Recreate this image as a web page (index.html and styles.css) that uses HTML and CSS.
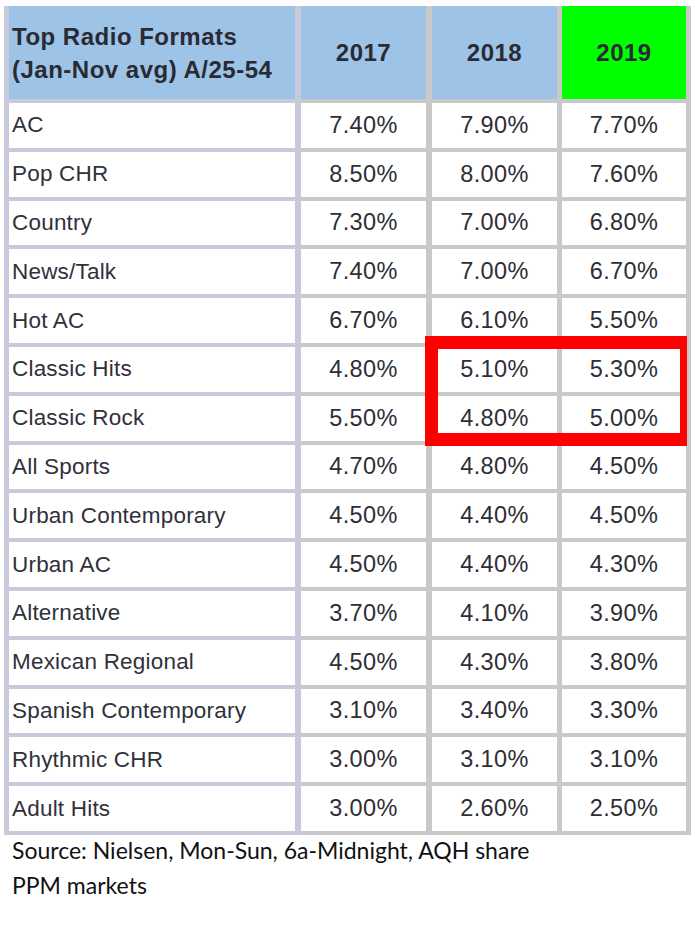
FILE: index.html
```
<!DOCTYPE html>
<html>
<head>
<meta charset="utf-8">
<link rel="stylesheet" href="styles.css">
</head>
<body>
<div class="wrap">
<table class="sheet">
<thead>
<tr>
<th class="c1">Top Radio Formats<br>(Jan-Nov avg) A/25-54</th>
<th class="c2">2017</th>
<th class="c3">2018</th>
<th class="c4 now">2019</th>
</tr>
</thead>
<tbody>
<tr><td class="c1">AC</td><td class="c2">7.40%</td><td class="c3">7.90%</td><td class="c4">7.70%</td></tr>
<tr><td class="c1">Pop CHR</td><td class="c2">8.50%</td><td class="c3">8.00%</td><td class="c4">7.60%</td></tr>
<tr><td class="c1">Country</td><td class="c2">7.30%</td><td class="c3">7.00%</td><td class="c4">6.80%</td></tr>
<tr><td class="c1">News/Talk</td><td class="c2">7.40%</td><td class="c3">7.00%</td><td class="c4">6.70%</td></tr>
<tr><td class="c1">Hot AC</td><td class="c2">6.70%</td><td class="c3">6.10%</td><td class="c4">5.50%</td></tr>
<tr><td class="c1">Classic Hits</td><td class="c2">4.80%</td><td class="c3">5.10%</td><td class="c4">5.30%</td></tr>
<tr><td class="c1">Classic Rock</td><td class="c2">5.50%</td><td class="c3">4.80%</td><td class="c4">5.00%</td></tr>
<tr><td class="c1">All Sports</td><td class="c2">4.70%</td><td class="c3">4.80%</td><td class="c4">4.50%</td></tr>
<tr><td class="c1">Urban Contemporary</td><td class="c2">4.50%</td><td class="c3">4.40%</td><td class="c4">4.50%</td></tr>
<tr><td class="c1">Urban AC</td><td class="c2">4.50%</td><td class="c3">4.40%</td><td class="c4">4.30%</td></tr>
<tr><td class="c1">Alternative</td><td class="c2">3.70%</td><td class="c3">4.10%</td><td class="c4">3.90%</td></tr>
<tr><td class="c1">Mexican Regional</td><td class="c2">4.50%</td><td class="c3">4.30%</td><td class="c4">3.80%</td></tr>
<tr><td class="c1">Spanish Contemporary</td><td class="c2">3.10%</td><td class="c3">3.40%</td><td class="c4">3.30%</td></tr>
<tr><td class="c1">Rhythmic CHR</td><td class="c2">3.00%</td><td class="c3">3.10%</td><td class="c4">3.10%</td></tr>
<tr><td class="c1">Adult Hits</td><td class="c2">3.00%</td><td class="c3">2.60%</td><td class="c4">2.50%</td></tr>
</tbody>
</table>
<div class="highlight"></div>
</div>
<div class="source">Source: Nielsen, Mon-Sun, 6a-Midnight, AQH share<br>PPM markets</div>
</body>
</html>
```
FILE: styles.css
```
html, body {
  margin: 0;
  padding: 0;
  background: #ffffff;
}

.wrap {
  position: relative;
  margin: 6px 0 0 4px;
  width: 687px;
}

.sheet {
  border-collapse: separate;
  border-spacing: 0;
  table-layout: fixed;
  font-family: "Liberation Sans", Arial, sans-serif;
  color: #2e2e34;
}

.sheet th,
.sheet td {
  padding: 0;
  background: #ffffff;
  border-bottom: 4px solid #c9c9c9;
  border-right: 6px solid #c9c9c9;
  box-sizing: content-box;
  text-align: center;
  vertical-align: middle;
}

.sheet td {
  height: 44.8px;
  font-size: 23.5px;
  letter-spacing: 0.4px;
}

.sheet th {
  height: 93px;
  background: #9dc3e6;
  font-weight: bold;
  font-size: 24px;
  line-height: 33px;
  letter-spacing: 0.5px;
  color: #2a2a34;
}

.sheet th.now {
  background: #00ff00;
}

.sheet .c1 {
  width: 283px;
  padding-left: 3px;
  text-align: left;
  border-left: 5px solid #c9c9dc;
  border-right-color: #c9c9dc;
  border-bottom-color: #c9c9dc;
}

.sheet td.c1 {
  font-size: 22.5px;
  letter-spacing: 0.2px;
  color: #30313a;
}

.sheet th.c1 {
  padding-top: 1px;
  height: 92px;
}

.sheet .c2 {
  width: 125px;
}

.sheet .c3 {
  width: 125px;
  border-right-width: 5px;
}

.sheet .c4 {
  width: 124px;
  border-right-width: 5px;
}

.highlight {
  position: absolute;
  left: 421px;
  top: 330px;
  width: 262px;
  height: 110px;
  box-sizing: border-box;
  border: 13px solid #ff0000;
  border-right-width: 7px;
}

.source {
  margin: -2px 0 0 12px;
  font-family: Lato, "Open Sans", sans-serif;
  font-size: 23px;
  line-height: 35px;
  color: #111111;
}
```
